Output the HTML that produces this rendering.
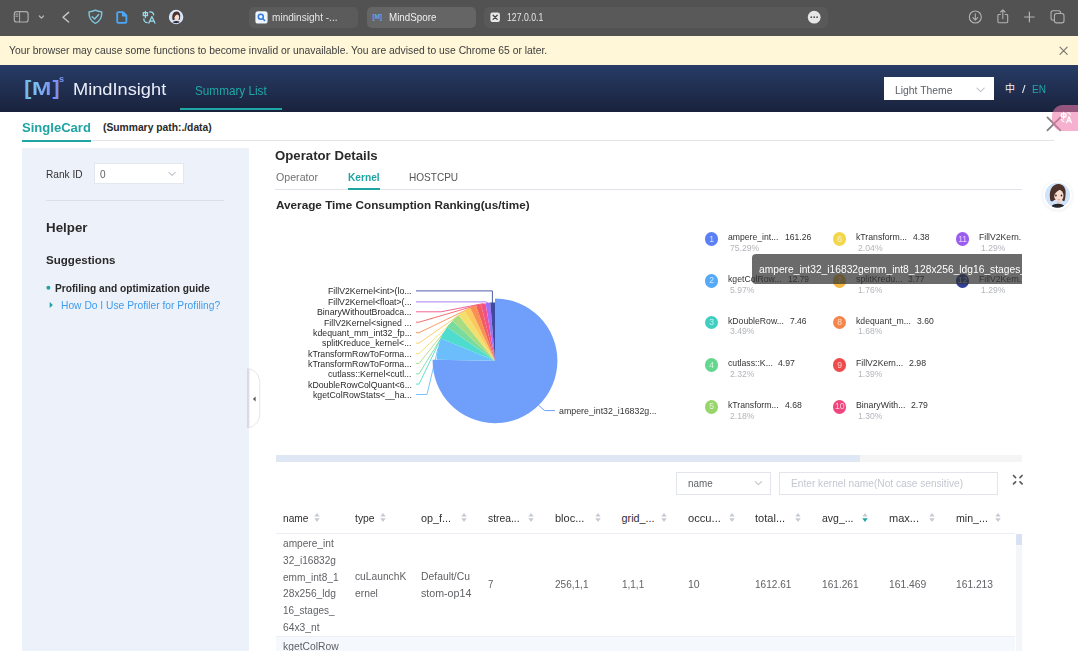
<!DOCTYPE html>
<html><head><meta charset="utf-8">
<style>
*{box-sizing:border-box;margin:0;padding:0}
html,body{width:1080px;height:651px;overflow:hidden;background:#fff;font-family:"Liberation Sans","Noto Sans CJK SC",sans-serif;color:#333}
.abs{position:absolute}
.t{position:absolute;white-space:pre;line-height:1;transform-origin:0 50%}
#chrome{position:absolute;left:0;top:0;width:1078px;height:36px;background:#525252}
.tab{position:absolute;top:7px;height:20.5px;border-radius:5px;background:#5d5d5d}
#warn{position:absolute;left:0;top:36px;width:1078px;height:29px;background:#fff7d8}
#nav{position:absolute;left:0;top:65px;width:1078px;height:47.3px;background:linear-gradient(#283c66,#19223c)}
#left{position:absolute;left:22px;top:147.5px;width:227.4px;height:504px;background:#edf1f9}
#clip{position:absolute;left:0;top:0;width:1022.4px;height:651px;overflow:hidden}
</style></head><body>
<div id="chrome">
  <div class="tab" style="left:248.9px;width:108.7px;background:#5b5b5b"></div>
  <div class="tab" style="left:366.8px;width:108.8px;background:#656565"></div>
  <div class="tab" style="left:484.4px;width:343.4px;background:#595959"></div>
</div>
<div id="warn"></div>
<div id="nav">
  <div class="abs" style="left:180px;top:42.6px;width:102px;height:2px;background:#1fa7a7"></div>
  <div class="abs" style="left:883.6px;top:12.2px;width:110px;height:23.2px;background:#fff"></div>
</div>
<div class="abs" style="left:22px;top:140.2px;width:1032px;height:1px;background:#e3e3e6"></div>
<div class="abs" style="left:22px;top:139.6px;width:69px;height:2px;background:#20a3a3"></div>
<div id="left">
  <div class="abs" style="left:71.5px;top:15.7px;width:90.2px;height:21px;background:#fff;border:1px solid #e3e7f0"></div>
  <div class="abs" style="left:23.6px;top:52.5px;width:178.4px;height:1px;background:#dcdfe6"></div>
</div>
<div class="abs" style="left:275px;top:188.8px;width:747px;height:1px;background:#e0e3ea"></div>
<div class="abs" style="left:347.8px;top:187.8px;width:32px;height:2px;background:#20a3a3"></div>
<!-- scrollbar -->
<div class="abs" style="left:276px;top:455.2px;width:746px;height:6.6px;background:#f5f5f5"></div>
<div class="abs" style="left:276px;top:455.2px;width:584.3px;height:6.6px;background:#dfe7f5"></div>
<!-- filter -->
<div class="abs" style="left:676px;top:472px;width:95px;height:22.7px;background:#fff;border:1px solid #e2e5eb"></div>
<div class="abs" style="left:779px;top:472px;width:219.4px;height:22.7px;background:#fff;border:1px solid #e2e5eb"></div>
<!-- table -->
<div class="abs" style="left:276px;top:533px;width:739px;height:1px;background:#ebeef5"></div>
<div class="abs" style="left:276px;top:636.5px;width:739px;height:15px;background:#f5f9fd"></div>
<div class="abs" style="left:276px;top:636.2px;width:739px;height:1px;background:#ebeef5"></div>
<div class="abs" style="left:1015.8px;top:533.5px;width:6px;height:118px;background:#f5f6fa"></div>
<div class="abs" style="left:1015.8px;top:533.5px;width:6px;height:11.5px;background:#d9e1f2"></div>
<svg class="abs" style="left:0;top:0" width="1080" height="651"><path d="M416,290.9 L492.4,290.9 L492.4,303.4" fill="none" stroke="#3b4b9f" stroke-width=".9"/><path d="M416,301.9 L486,301.9 L487.9,302.8" fill="none" stroke="#a26ef8" stroke-width=".9"/><path d="M416,311.8 L441,311.8 L483.2,303.6" fill="none" stroke="#f0518b" stroke-width=".9"/><path d="M416,322.2 L419,322.2 L478.4,304.8" fill="none" stroke="#f25e5e" stroke-width=".9"/><path d="M416,332.7 L419,332.7 L473.1,306.7" fill="none" stroke="#f98f52" stroke-width=".9"/><path d="M416,343.1 L419,343.1 L467.4,309.3" fill="none" stroke="#fbc95c" stroke-width=".9"/><path d="M416,353.6 L419,353.6 L461.5,313.0" fill="none" stroke="#f3e06c" stroke-width=".9"/><path d="M416,363.5 L419,363.5 L455.5,317.8" fill="none" stroke="#a8dc82" stroke-width=".9"/><path d="M416,373.9 L419,373.9 L449.8,323.8" fill="none" stroke="#78dc9e" stroke-width=".9"/><path d="M416,384.1 L419,384.1 L443.8,332.6" fill="none" stroke="#4edccf" stroke-width=".9"/><path d="M416,394.5 L427,394.5 L437.8,348.9" fill="none" stroke="#6cbdfc" stroke-width=".9"/><path d="M538.7,405.3 L544.6,410.6 L555,410.6" fill="none" stroke="#6f9ffb" stroke-width="1"/><path d="M495,360.8 L495.00,298.40 A62.4,62.4 0 1 1 432.61,359.66 Z" fill="#6f9ffb"/><path d="M495,360.8 L436.61,359.74 A58.4,58.4 0 0 1 441.06,338.42 Z" fill="#6cbdfc"/><path d="M495,360.8 L441.06,338.42 A58.4,58.4 0 0 1 447.22,327.22 Z" fill="#4edccf"/><path d="M495,360.8 L447.22,327.22 A58.4,58.4 0 0 1 452.60,320.64 Z" fill="#78dc9e"/><path d="M495,360.8 L452.60,320.64 A58.4,58.4 0 0 1 458.49,315.22 Z" fill="#a8dc82"/><path d="M495,360.8 L458.49,315.22 A58.4,58.4 0 0 1 464.61,310.93 Z" fill="#f3e06c"/><path d="M495,360.8 L464.61,310.93 A58.4,58.4 0 0 1 470.30,307.88 Z" fill="#fbc95c"/><path d="M495,360.8 L470.30,307.88 A58.4,58.4 0 0 1 476.01,305.57 Z" fill="#f98f52"/><path d="M495,360.8 L476.01,305.57 A58.4,58.4 0 0 1 480.90,304.13 Z" fill="#f25e5e"/><path d="M495,360.8 L480.90,304.13 A58.4,58.4 0 0 1 485.57,303.17 Z" fill="#f0518b"/><path d="M495,360.8 L485.57,303.17 A58.4,58.4 0 0 1 490.27,302.59 Z" fill="#a26ef8"/><path d="M495,360.8 L490.27,302.59 A58.4,58.4 0 0 1 495.00,302.40 Z" fill="#3b4b9f"/></svg>
<svg class="abs" style="left:0;top:0" width="1080" height="140" fill="none" stroke-linecap="round" stroke-linejoin="round">
  <!-- sidebar -->
  <rect x="14.3" y="11.6" width="13.8" height="10.4" rx="2.3" stroke="#adadad" stroke-width="1.2"/>
  <path d="M19.6,11.6 V22 M15.9,14.2 H17.9 M15.9,16.2 H17.9" stroke="#adadad" stroke-width="1"/>
  <path d="M39.3,16 L41.4,18.1 L43.5,16" stroke="#b5b5b5" stroke-width="1.3"/>
  <path d="M68.6,12.4 L63,17.2 L68.6,22" stroke="#c4c4c4" stroke-width="1.5"/>
  <!-- shield -->
  <path d="M95.4,10.2 C93,11.5 90.8,11.8 89,11.9 C88.8,16.6 90.4,20.9 95.4,23.5 C100.4,20.9 102,16.6 101.8,11.9 C100,11.8 97.8,11.5 95.4,10.2 Z" stroke="#82c8df" stroke-width="1.4"/>
  <path d="M92.2,16.7 L94.6,19 L98.7,14.6" stroke="#82c8df" stroke-width="1.4"/>
  <!-- doc -->
  <path d="M118.4,12.1 L123,12.1 L126.4,15.5 L126.4,21.5 Q126.4,22.8 125.1,22.8 L118.4,22.8 Q117.2,22.8 117.2,21.5 L117.2,13.3 Q117.2,12.1 118.4,12.1 Z M122.8,12.3 L122.8,15.7 L126.2,15.7" stroke="#4ca8f8" stroke-width="1.8"/>
  <!-- translate -->
  <g stroke="#98dcec" stroke-width="1.25">
    <path d="M143.3,12.7 H147.5 V15.7 H143.3 Z M145.4,11.4 V17.6"/>
    <path d="M148.9,23.1 L151.9,16.6 L154.9,23.1 M150,21 H153.8"/>
    <path d="M149.6,12 Q153.2,11.8 153.7,14.8 M143.9,18.9 Q143.7,22.3 147.2,22.6"/>
  </g>
  <!-- avatar small -->
  <g transform="translate(176.1,17) scale(.5) translate(-19.5,-19.2)" stroke="none">
    <circle cx="19.5" cy="19.2" r="14.4" fill="#e3ebf7"/>
    <circle cx="19.5" cy="19.2" r="12" fill="#cfe0f7"/>
    <g clip-path="url(#avc)">
    <path d="M12.4,24.8 C11.6,21 11.4,16.5 13,13 C14.6,9.4 18,7.8 21,8 C24.6,8.3 27,11 27.5,14.6 C27.9,18 27.4,22 26.6,24.8 C25.6,25.4 24.6,25 24.4,24 L16,24 C15.6,25.4 13.6,25.8 12.4,24.8 Z" fill="#4c322b"/>
    <rect x="19" y="23.6" width="3.4" height="5.4" fill="#f0cdbd"/>
    <ellipse cx="20.8" cy="19.6" rx="4.7" ry="5.9" fill="#f7ddd0"/>
    <path d="M15.2,19.6 C15.2,15 17.4,11.4 21.6,10.6 C24.6,11.2 26.4,13.6 26.7,17.6 C25.4,15.4 23.6,14 21.8,13.6 C19.6,15.4 17.2,16.2 16.3,19.8 Z" fill="#4c322b"/>
    <ellipse cx="20" cy="31.4" rx="7.4" ry="4" fill="#26263a"/>
    </g>
  </g>
  <!-- tab1 icon -->
  <rect x="255.4" y="11.3" width="12.2" height="12.2" rx="2.6" fill="#eef3fa" stroke="none"/>
  <circle cx="260.8" cy="16.7" r="2.5" stroke="#2f7de1" stroke-width="1.5"/>
  <path d="M262.8,18.7 L264.6,20.5" stroke="#2f7de1" stroke-width="1.6"/>
  <!-- tab3 icon -->
  <rect x="490.4" y="12.6" width="9.5" height="9.5" rx="2" fill="#e9e9e9" stroke="none"/>
  <path d="M493.1,15.3 L497.2,19.4 M497.2,15.3 L493.1,19.4" stroke="#444" stroke-width="1.3"/>
  <!-- dots -->
  <circle cx="814.2" cy="17.2" r="6.4" fill="#e6e6e6" stroke="none"/>
  <circle cx="811.3" cy="17.2" r=".9" fill="#525252" stroke="none"/><circle cx="814.2" cy="17.2" r=".9" fill="#525252" stroke="none"/><circle cx="817.1" cy="17.2" r=".9" fill="#525252" stroke="none"/>
  <!-- download -->
  <g stroke="#b2b2b2" stroke-width="1.1">
  <circle cx="975.3" cy="17" r="6"/>
  <path d="M975.3,13.8 V20 M972.9,17.7 L975.3,20.1 L977.7,17.7"/>
  <!-- share -->
  <path d="M1000.4,14.5 H998.8 Q997.9,14.5 997.9,15.4 V21.8 Q997.9,22.7 998.8,22.7 H1006.8 Q1007.7,22.7 1007.7,21.8 V15.4 Q1007.7,14.5 1006.8,14.5 H1005.2"/>
  <path d="M1002.8,18.6 V10 M1000.6,12 L1002.8,9.8 L1005,12"/>
  <!-- plus -->
  <path d="M1029.4,12.2 V21.8 M1024.6,17 H1034.2" stroke-width="1.2"/>
  <!-- tabs -->
  <rect x="1051" y="10.8" width="9.6" height="9.4" rx="2.2"/>
  <rect x="1054.4" y="13.5" width="9.6" height="9.4" rx="2.2" fill="#525252"/>
  </g>
  <!-- warn close -->
  <path d="M1060,47.1 L1067.2,54.3 M1067.2,47.1 L1060,54.3" stroke="#7a7a72" stroke-width="1.2"/>
  <!-- light theme chevron -->
  <path d="M977,88.2 L980.6,91.6 L984.2,88.2" stroke="#c0c4cc" stroke-width="1.1"/>
  <!-- close X -->
  <path d="M1047.4,117.4 L1060.4,130.4 M1060.4,117.4 L1047.4,130.4" stroke="#7d7d7d" stroke-width="1.7"/>
</svg>
<!-- logo text -->
<span class="t" style="left:24.2px;top:77.2px;font-size:21px;font-weight:bold;color:#73bdee">[</span>
<span class="t" style="left:32.4px;top:80.2px;font-size:18.3px;font-weight:bold;transform:scaleX(1.27);background:linear-gradient(90deg,#7cc4f0,#7b95f2);-webkit-background-clip:text;background-clip:text;color:transparent">M</span>
<span class="t" style="left:52.4px;top:77.2px;font-size:21px;font-weight:bold;color:#7d92f2">]</span>
<span class="t" style="left:59px;top:75.2px;font-size:9px;font-weight:bold;color:#7d92f2">s</span>
<span class="t" style="left:372.6px;top:14.2px;font-size:6.5px;font-weight:bold;color:#62a6ea;letter-spacing:-.2px">[M]</span>
<span class="t" style="left:1005px;top:84px;font-size:10px;color:#eef2fa">中</span>
<!-- pink badge -->
<div class="abs" style="left:1052.3px;top:105px;width:25.7px;height:25.5px;border-radius:11px 0 0 11px;background:rgba(240,120,170,.58)"></div>
<svg class="abs" style="left:1060.2px;top:110.6px" width="16" height="18" viewBox="0 0 18.5 20.8" fill="none" stroke="#fff" stroke-width="1.4" stroke-linecap="round" stroke-linejoin="round">
  <path d="M1.6,3.4 H6.8 V6.8 H1.6 Z M4.2,1.6 V9.2"/><path d="M7.6,13.6 L10.4,6.6 L13.2,13.6 M8.6,11.4 H12.2"/><path d="M9,2 Q11.6,2 12,4.2 M1.8,9.6 Q2,12 4.6,12.2"/>
</svg>
<!-- avatar big -->
<svg class="abs" style="left:1038px;top:176px" width="40" height="40">
  <defs><clipPath id="avc"><circle cx="19.5" cy="19.2" r="12.5"/></clipPath>
  <radialGradient id="avs"><stop offset="0.8" stop-color="#000" stop-opacity=".045"/><stop offset="1" stop-color="#000" stop-opacity="0"/></radialGradient></defs>
  <circle cx="19.5" cy="19.9" r="17.5" fill="url(#avs)"/>
  <circle cx="19.5" cy="19.2" r="14.4" fill="#fff"/>
  <circle cx="19.5" cy="19.2" r="12.5" fill="#cfe3fb"/>
  <g clip-path="url(#avc)">
    <path d="M12.4,24.8 C11.6,21 11.4,16.5 13,13 C14.6,9.4 18,7.8 21,8 C24.6,8.3 27,11 27.5,14.6 C27.9,18 27.4,22 26.6,24.8 C25.6,25.4 24.6,25 24.4,24 L16,24 C15.6,25.4 13.6,25.8 12.4,24.8 Z" fill="#4c322b"/>
    <rect x="19" y="23.6" width="3.4" height="5.4" fill="#f0cdbd"/>
    <ellipse cx="20.8" cy="19.6" rx="4.7" ry="5.9" fill="#f7ddd0"/>
    <path d="M15.2,19.6 C15.2,15 17.4,11.4 21.6,10.6 C24.6,11.2 26.4,13.6 26.7,17.6 C25.4,15.4 23.6,14 21.8,13.6 C19.6,15.4 17.2,16.2 16.3,19.8 Z" fill="#4c322b"/>
    <ellipse cx="17.9" cy="19.4" rx=".85" ry="1" fill="#3a2622"/><ellipse cx="23.5" cy="19.4" rx=".85" ry="1" fill="#3a2622"/>
    <path d="M19.8,23.5 Q20.8,24.2 21.8,23.5" stroke="#d98a8a" stroke-width=".9" fill="none"/>
    <ellipse cx="20" cy="31.4" rx="7" ry="3.6" fill="#26262a"/>
  </g>
</svg>
<!-- left panel glyphs -->
<svg class="abs" style="left:0;top:140px" width="270" height="300" fill="none" stroke-linecap="round" stroke-linejoin="round">
  <path d="M168.9,32.4 L172.1,35.4 L175.3,32.4" stroke="#c0c4cc" stroke-width="1.1"/>
  <circle cx="48.4" cy="147.7" r="2" fill="#20a3a3"/>
  <path d="M49.7,162 L52.9,165 L49.7,168 Z" fill="#20a3a3"/>
  <!-- handle -->
  <path d="M249.4,228.8 C256,230.8 259.8,236 259.8,243 L259.8,273.4 C259.8,280.4 256,285.6 249.4,287.6 Z" fill="#fff" stroke="#e6e6ea" stroke-width="1"/>
  <path d="M247.9,229 V287.4" stroke="#d4d7df" stroke-width="1.6"/>
  <path d="M255.6,256.4 L252.9,259 L255.6,261.6 Z" fill="#555"/>
</svg>
<!-- name select chevron + fullscreen -->
<svg class="abs" style="left:740px;top:468px" width="300" height="30" fill="none" stroke-linecap="round" stroke-linejoin="round">
  <path d="M15.2,13.6 L18.4,16.6 L21.6,13.6" stroke="#c0c4cc" stroke-width="1.1"/>
  <g stroke="#5a5a5a" stroke-width="1.7">
    <path d="M273.5,7.5 L275.6,9.6"/><path d="M282.1,7.5 L280,9.6"/><path d="M273.5,15.9 L275.6,13.8"/><path d="M282.1,15.9 L280,13.8"/>
  </g>
</svg>

<span class="t" style="left:271.7px;top:12.0px;font-size:10.5px;color:#e6e6e6;transform:scaleX(0.959)">mindinsight -...</span>
<span class="t" style="left:388.7px;top:12.0px;font-size:10.5px;color:#f0f0f0;transform:scaleX(0.933)">MindSpore</span>
<span class="t" style="left:506.7px;top:12.0px;font-size:10.5px;color:#e6e6e6;transform:scaleX(0.831)">127.0.0.1</span>
<span class="t" style="left:9.0px;top:45.0px;font-size:10.6px;color:#3c3c3c;transform:scaleX(0.976)">Your browser may cause some functions to become invalid or unavailable. You are advised to use Chrome 65 or later.</span>
<span class="t" style="left:72.8px;top:81.0px;font-size:17px;color:#e9eef9;transform:scaleX(1.072)">MindInsight</span>
<span class="t" style="left:195.0px;top:85.0px;font-size:12.4px;color:#1fa7a7;transform:scaleX(0.947)">Summary List</span>
<span class="t" style="left:895.4px;top:85.0px;font-size:10.6px;color:#5a5e66;transform:scaleX(0.978)">Light Theme</span>
<span class="t" style="left:1031.5px;top:84.0px;font-size:10.6px;color:#1fa7a7;transform:scaleX(0.951)">EN</span>
<span class="t" style="left:1021.5px;top:84.0px;font-size:10.6px;color:#e9eef9;transform:scaleX(1.185)">/</span>
<span class="t" style="left:22.2px;top:121.0px;font-size:13px;font-weight:bold;color:#20a3a3;transform:scaleX(1.004)">SingleCard</span>
<span class="t" style="left:103.0px;top:123.0px;font-size:10.3px;font-weight:bold;color:#2a2a2a;transform:scaleX(1.000)">(Summary path:./data)</span>
<span class="t" style="left:45.6px;top:169.0px;font-size:11px;color:#333;transform:scaleX(0.921)">Rank ID</span>
<span class="t" style="left:100.4px;top:169.0px;font-size:10.6px;color:#606266;transform:scaleX(0.948)">0</span>
<span class="t" style="left:45.6px;top:221.0px;font-size:13.2px;font-weight:bold;color:#2a2a2a;transform:scaleX(1.011)">Helper</span>
<span class="t" style="left:45.6px;top:255.0px;font-size:11.8px;font-weight:bold;color:#2a2a2a;transform:scaleX(0.980)">Suggestions</span>
<span class="t" style="left:54.8px;top:283.0px;font-size:11px;font-weight:bold;color:#2a2a2a;transform:scaleX(0.925)">Profiling and optimization guide</span>
<span class="t" style="left:60.9px;top:300.0px;font-size:11px;color:#3e9cf0;transform:scaleX(0.933)">How Do I Use Profiler for Profiling?</span>
<span class="t" style="left:275.3px;top:149.0px;font-size:13px;font-weight:bold;color:#2a2a2a;transform:scaleX(1.015)">Operator Details</span>
<span class="t" style="left:275.8px;top:172.0px;font-size:11px;color:#727272;transform:scaleX(0.967)">Operator</span>
<span class="t" style="left:347.8px;top:172.0px;font-size:11px;font-weight:bold;color:#20a3a3;transform:scaleX(0.923)">Kernel</span>
<span class="t" style="left:409.2px;top:172.0px;font-size:11px;color:#555;transform:scaleX(0.913)">HOSTCPU</span>
<span class="t" style="left:275.8px;top:199.0px;font-size:11.6px;font-weight:bold;color:#2a2a2a;transform:scaleX(1.012)">Average Time Consumption Ranking(us/time)</span>
<span class="t" style="left:558.6px;top:406.0px;font-size:9.8px;color:#333;transform:scaleX(0.900)">ampere_int32_i16832g...</span>
<span class="t" style="left:283.0px;top:513.0px;font-size:10.8px;color:#2f2f2f;transform:scaleX(0.940)">name</span>
<span class="t" style="left:354.6px;top:513.0px;font-size:10.8px;color:#2f2f2f;transform:scaleX(0.960)">type</span>
<span class="t" style="left:421.0px;top:513.0px;font-size:10.8px;color:#2f2f2f;transform:scaleX(0.999)">op_f...</span>
<span class="t" style="left:488.1px;top:513.0px;font-size:10.8px;color:#2f2f2f;transform:scaleX(0.957)">strea...</span>
<span class="t" style="left:554.9px;top:513.0px;font-size:10.8px;color:#2f2f2f;transform:scaleX(1.020)">bloc...</span>
<span class="t" style="left:621.6px;top:513.0px;font-size:10.8px;color:#2f2f2f;transform:scaleX(1.000)">grid_...</span>
<span class="t" style="left:688.1px;top:513.0px;font-size:10.8px;color:#2f2f2f;transform:scaleX(1.034)">occu...</span>
<span class="t" style="left:755.2px;top:513.0px;font-size:10.8px;color:#2f2f2f;transform:scaleX(1.023)">total...</span>
<span class="t" style="left:821.8px;top:513.0px;font-size:10.8px;color:#2f2f2f;transform:scaleX(0.972)">avg_...</span>
<span class="t" style="left:888.7px;top:513.0px;font-size:10.8px;color:#2f2f2f;transform:scaleX(1.020)">max...</span>
<span class="t" style="left:955.6px;top:513.0px;font-size:10.8px;color:#2f2f2f;transform:scaleX(0.984)">min_...</span>
<span class="t" style="left:283.0px;top:538.0px;font-size:10.6px;color:#606266;transform:scaleX(0.957)">ampere_int</span>
<span class="t" style="left:283.0px;top:555.0px;font-size:10.6px;color:#606266;transform:scaleX(0.957)">32_i16832g</span>
<span class="t" style="left:283.0px;top:572.0px;font-size:10.6px;color:#606266;transform:scaleX(0.952)">emm_int8_1</span>
<span class="t" style="left:283.0px;top:588.0px;font-size:10.6px;color:#606266;transform:scaleX(0.967)">28x256_ldg</span>
<span class="t" style="left:283.0px;top:605.0px;font-size:10.6px;color:#606266;transform:scaleX(0.940)">16_stages_</span>
<span class="t" style="left:283.0px;top:622.0px;font-size:10.6px;color:#606266;transform:scaleX(0.968)">64x3_nt</span>
<span class="t" style="left:354.6px;top:571.0px;font-size:10.6px;color:#606266;transform:scaleX(0.966)">cuLaunchK</span>
<span class="t" style="left:354.6px;top:588.0px;font-size:10.6px;color:#606266;transform:scaleX(0.972)">ernel</span>
<span class="t" style="left:421.0px;top:571.0px;font-size:10.6px;color:#606266;transform:scaleX(0.979)">Default/Cu</span>
<span class="t" style="left:421.0px;top:588.0px;font-size:10.6px;color:#606266;transform:scaleX(1.005)">stom-op14</span>
<span class="t" style="left:488.1px;top:579.0px;font-size:10.6px;color:#606266;transform:scaleX(0.914)">7</span>
<span class="t" style="left:554.9px;top:579.0px;font-size:10.6px;color:#606266;transform:scaleX(0.947)">256,1,1</span>
<span class="t" style="left:621.6px;top:579.0px;font-size:10.6px;color:#606266;transform:scaleX(0.942)">1,1,1</span>
<span class="t" style="left:688.1px;top:579.0px;font-size:10.6px;color:#606266;transform:scaleX(0.992)">10</span>
<span class="t" style="left:755.2px;top:579.0px;font-size:10.6px;color:#606266;transform:scaleX(0.950)">1612.61</span>
<span class="t" style="left:821.8px;top:579.0px;font-size:10.6px;color:#606266;transform:scaleX(0.956)">161.261</span>
<span class="t" style="left:888.7px;top:579.0px;font-size:10.6px;color:#606266;transform:scaleX(0.974)">161.469</span>
<span class="t" style="left:955.6px;top:579.0px;font-size:10.6px;color:#606266;transform:scaleX(0.966)">161.213</span>
<span class="t" style="left:283.0px;top:641.0px;font-size:10.6px;color:#606266;transform:scaleX(0.975)">kgetColRow</span>
<span class="t" style="left:687.8px;top:478.0px;font-size:10.6px;color:#606266;transform:scaleX(0.932)">name</span>
<span class="t" style="left:790.6px;top:478.0px;font-size:10.6px;color:#c3c7cf;transform:scaleX(0.958)">Enter kernel name(Not case sensitive)</span>
<span class="t" style="left:327.8px;top:286.0px;font-size:9.8px;color:#2a2a2a;transform:scaleX(0.892)">FillV2Kernel&lt;int&gt;(lo...</span>
<span class="t" style="left:327.6px;top:297.0px;font-size:9.8px;color:#2a2a2a;transform:scaleX(0.889)">FillV2Kernel&lt;float&gt;(...</span>
<span class="t" style="left:316.8px;top:307.0px;font-size:9.8px;color:#2a2a2a;transform:scaleX(0.895)">BinaryWithoutBroadca...</span>
<span class="t" style="left:323.8px;top:318.0px;font-size:9.8px;color:#2a2a2a;transform:scaleX(0.891)">FillV2Kernel&lt;signed ...</span>
<span class="t" style="left:312.5px;top:328.0px;font-size:9.8px;color:#2a2a2a;transform:scaleX(0.895)">kdequant_mm_int32_fp...</span>
<span class="t" style="left:322.0px;top:338.0px;font-size:9.8px;color:#2a2a2a;transform:scaleX(0.895)">splitKreduce_kernel&lt;...</span>
<span class="t" style="left:307.8px;top:349.0px;font-size:9.8px;color:#2a2a2a;transform:scaleX(0.896)">kTransformRowToForma...</span>
<span class="t" style="left:307.8px;top:359.0px;font-size:9.8px;color:#2a2a2a;transform:scaleX(0.896)">kTransformRowToForma...</span>
<span class="t" style="left:328.0px;top:369.0px;font-size:9.8px;color:#2a2a2a;transform:scaleX(0.893)">cutlass::Kernel&lt;cutl...</span>
<span class="t" style="left:307.5px;top:380.0px;font-size:9.8px;color:#2a2a2a;transform:scaleX(0.894)">kDoubleRowColQuant&lt;6...</span>
<span class="t" style="left:312.5px;top:390.0px;font-size:9.8px;color:#2a2a2a;transform:scaleX(0.892)">kgetColRowStats&lt;__ha...</span>
<div id="clip">
<div class="abs" style="left:704.8px;top:232.2px;width:13.6px;height:13.6px;border-radius:50%;background:#5b80f3"></div><span class="t" style="left:705.1px;top:234.6px;width:13px;text-align:center;font-size:8.6px;color:#fff;opacity:.72">1</span>
<div class="abs" style="left:704.8px;top:274.0px;width:13.6px;height:13.6px;border-radius:50%;background:#55a9f6"></div><span class="t" style="left:705.1px;top:276.4px;width:13px;text-align:center;font-size:8.6px;color:#fff;opacity:.72">2</span>
<div class="abs" style="left:704.8px;top:315.9px;width:13.6px;height:13.6px;border-radius:50%;background:#3fcfc0"></div><span class="t" style="left:705.1px;top:318.3px;width:13px;text-align:center;font-size:8.6px;color:#fff;opacity:.72">3</span>
<div class="abs" style="left:704.8px;top:358.3px;width:13.6px;height:13.6px;border-radius:50%;background:#65d68e"></div><span class="t" style="left:705.1px;top:360.7px;width:13px;text-align:center;font-size:8.6px;color:#fff;opacity:.72">4</span>
<div class="abs" style="left:704.8px;top:400.0px;width:13.6px;height:13.6px;border-radius:50%;background:#98d66c"></div><span class="t" style="left:705.1px;top:402.4px;width:13px;text-align:center;font-size:8.6px;color:#fff;opacity:.72">5</span>
<div class="abs" style="left:832.9px;top:232.2px;width:13.6px;height:13.6px;border-radius:50%;background:#f3d74a"></div><span class="t" style="left:833.2px;top:234.6px;width:13px;text-align:center;font-size:8.6px;color:#fff;opacity:.72">6</span>
<div class="abs" style="left:832.9px;top:274.0px;width:13.6px;height:13.6px;border-radius:50%;background:#f5b941"></div><span class="t" style="left:833.2px;top:276.4px;width:13px;text-align:center;font-size:8.6px;color:#fff;opacity:.72">7</span>
<div class="abs" style="left:832.9px;top:315.9px;width:13.6px;height:13.6px;border-radius:50%;background:#f5864b"></div><span class="t" style="left:833.2px;top:318.3px;width:13px;text-align:center;font-size:8.6px;color:#fff;opacity:.72">8</span>
<div class="abs" style="left:832.9px;top:358.3px;width:13.6px;height:13.6px;border-radius:50%;background:#ee4c4c"></div><span class="t" style="left:833.2px;top:360.7px;width:13px;text-align:center;font-size:8.6px;color:#fff;opacity:.72">9</span>
<div class="abs" style="left:832.9px;top:400.0px;width:13.6px;height:13.6px;border-radius:50%;background:#f0467e"></div><span class="t" style="left:833.2px;top:402.4px;width:13px;text-align:center;font-size:8.6px;color:#fff;opacity:.72">10</span>
<div class="abs" style="left:955.9px;top:232.2px;width:13.6px;height:13.6px;border-radius:50%;background:#9a5df0"></div><span class="t" style="left:956.2px;top:234.6px;width:13px;text-align:center;font-size:8.6px;color:#fff;opacity:.72">11</span>
<div class="abs" style="left:955.9px;top:274.0px;width:13.6px;height:13.6px;border-radius:50%;background:#30409a"></div><span class="t" style="left:956.2px;top:276.4px;width:13px;text-align:center;font-size:8.6px;color:#fff;opacity:.72">12</span>
<span class="t" style="left:728.3px;top:232.0px;font-size:9.8px;color:#333;transform:scaleX(0.881)">ampere_int...</span>
<span class="t" style="left:784.6px;top:232.0px;font-size:9.8px;color:#333;transform:scaleX(0.874)">161.26</span>
<span class="t" style="left:729.6px;top:243.0px;font-size:9.8px;color:#b2b5bb;transform:scaleX(0.882)">75.29%</span>
<span class="t" style="left:728.3px;top:274.0px;font-size:9.8px;color:#333;transform:scaleX(0.888)">kgetColRow...</span>
<span class="t" style="left:788.0px;top:274.0px;font-size:9.8px;color:#333;transform:scaleX(0.856)">12.79</span>
<span class="t" style="left:729.6px;top:285.0px;font-size:9.8px;color:#b2b5bb;transform:scaleX(0.885)">5.97%</span>
<span class="t" style="left:728.3px;top:316.0px;font-size:9.8px;color:#333;transform:scaleX(0.885)">kDoubleRow...</span>
<span class="t" style="left:790.0px;top:316.0px;font-size:9.8px;color:#333;transform:scaleX(0.865)">7.46</span>
<span class="t" style="left:729.6px;top:326.0px;font-size:9.8px;color:#b2b5bb;transform:scaleX(0.885)">3.49%</span>
<span class="t" style="left:728.3px;top:358.0px;font-size:9.8px;color:#333;transform:scaleX(0.887)">cutlass::K...</span>
<span class="t" style="left:778.3px;top:358.0px;font-size:9.8px;color:#333;transform:scaleX(0.886)">4.97</span>
<span class="t" style="left:729.6px;top:369.0px;font-size:9.8px;color:#b2b5bb;transform:scaleX(0.878)">2.32%</span>
<span class="t" style="left:728.3px;top:400.0px;font-size:9.8px;color:#333;transform:scaleX(0.884)">kTransform...</span>
<span class="t" style="left:784.6px;top:400.0px;font-size:9.8px;color:#333;transform:scaleX(0.886)">4.68</span>
<span class="t" style="left:729.6px;top:411.0px;font-size:9.8px;color:#b2b5bb;transform:scaleX(0.878)">2.18%</span>
<span class="t" style="left:856.2px;top:232.0px;font-size:9.8px;color:#333;transform:scaleX(0.889)">kTransform...</span>
<span class="t" style="left:912.5px;top:232.0px;font-size:9.8px;color:#333;transform:scaleX(0.865)">4.38</span>
<span class="t" style="left:857.7px;top:243.0px;font-size:9.8px;color:#b2b5bb;transform:scaleX(0.889)">2.04%</span>
<span class="t" style="left:856.2px;top:274.0px;font-size:9.8px;color:#333;transform:scaleX(0.901)">splitKredu...</span>
<span class="t" style="left:907.6px;top:274.0px;font-size:9.8px;color:#333;transform:scaleX(0.870)">3.77</span>
<span class="t" style="left:857.7px;top:285.0px;font-size:9.8px;color:#b2b5bb;transform:scaleX(0.875)">1.76%</span>
<span class="t" style="left:856.2px;top:316.0px;font-size:9.8px;color:#333;transform:scaleX(0.884)">kdequant_m...</span>
<span class="t" style="left:916.8px;top:316.0px;font-size:9.8px;color:#333;transform:scaleX(0.875)">3.60</span>
<span class="t" style="left:857.7px;top:326.0px;font-size:9.8px;color:#b2b5bb;transform:scaleX(0.875)">1.68%</span>
<span class="t" style="left:856.2px;top:358.0px;font-size:9.8px;color:#333;transform:scaleX(0.883)">FillV2Kern...</span>
<span class="t" style="left:908.7px;top:358.0px;font-size:9.8px;color:#333;transform:scaleX(0.896)">2.98</span>
<span class="t" style="left:857.7px;top:369.0px;font-size:9.8px;color:#b2b5bb;transform:scaleX(0.875)">1.39%</span>
<span class="t" style="left:856.2px;top:400.0px;font-size:9.8px;color:#333;transform:scaleX(0.890)">BinaryWith...</span>
<span class="t" style="left:910.7px;top:400.0px;font-size:9.8px;color:#333;transform:scaleX(0.886)">2.79</span>
<span class="t" style="left:857.7px;top:411.0px;font-size:9.8px;color:#b2b5bb;transform:scaleX(0.875)">1.30%</span>
<span class="t" style="left:978.6px;top:232.0px;font-size:9.8px;color:#333;transform:scaleX(0.881)">FillV2Kern...</span>
<span class="t" style="left:980.6px;top:243.0px;font-size:9.8px;color:#b2b5bb;transform:scaleX(0.875)">1.29%</span>
<span class="t" style="left:978.6px;top:274.0px;font-size:9.8px;color:#333;transform:scaleX(0.881)">FillV2Kern...</span>
<span class="t" style="left:980.6px;top:285.0px;font-size:9.8px;color:#b2b5bb;transform:scaleX(0.875)">1.29%</span>
<div class="abs" style="left:751.6px;top:254.2px;width:300px;height:29.4px;border-radius:4px;background:rgba(50,50,50,0.72)"></div>
<span class="t" style="left:759.2px;top:264px;font-size:10.9px;color:#fff;transform:scaleX(0.940)">ampere_int32_i16832gemm_int8_128x256_ldg16_stages_64x3_nt</span>
</div>
<svg class="abs" style="left:313.2px;top:511.8px" width="8" height="11"><path d="M4,0.9 L6.7,4.5 L1.3,4.5 Z" fill="#c6cad2"/><path d="M4,9.9 L6.7,6.2 L1.3,6.2 Z" fill="#c6cad2"/></svg><svg class="abs" style="left:379.0px;top:511.8px" width="8" height="11"><path d="M4,0.9 L6.7,4.5 L1.3,4.5 Z" fill="#c6cad2"/><path d="M4,9.9 L6.7,6.2 L1.3,6.2 Z" fill="#c6cad2"/></svg><svg class="abs" style="left:459.7px;top:511.8px" width="8" height="11"><path d="M4,0.9 L6.7,4.5 L1.3,4.5 Z" fill="#c6cad2"/><path d="M4,9.9 L6.7,6.2 L1.3,6.2 Z" fill="#c6cad2"/></svg><svg class="abs" style="left:526.8px;top:511.8px" width="8" height="11"><path d="M4,0.9 L6.7,4.5 L1.3,4.5 Z" fill="#c6cad2"/><path d="M4,9.9 L6.7,6.2 L1.3,6.2 Z" fill="#c6cad2"/></svg><svg class="abs" style="left:593.6px;top:511.8px" width="8" height="11"><path d="M4,0.9 L6.7,4.5 L1.3,4.5 Z" fill="#c6cad2"/><path d="M4,9.9 L6.7,6.2 L1.3,6.2 Z" fill="#c6cad2"/></svg><svg class="abs" style="left:660.4px;top:511.8px" width="8" height="11"><path d="M4,0.9 L6.7,4.5 L1.3,4.5 Z" fill="#c6cad2"/><path d="M4,9.9 L6.7,6.2 L1.3,6.2 Z" fill="#c6cad2"/></svg><svg class="abs" style="left:727.5px;top:511.8px" width="8" height="11"><path d="M4,0.9 L6.7,4.5 L1.3,4.5 Z" fill="#c6cad2"/><path d="M4,9.9 L6.7,6.2 L1.3,6.2 Z" fill="#c6cad2"/></svg><svg class="abs" style="left:794.0px;top:511.8px" width="8" height="11"><path d="M4,0.9 L6.7,4.5 L1.3,4.5 Z" fill="#c6cad2"/><path d="M4,9.9 L6.7,6.2 L1.3,6.2 Z" fill="#c6cad2"/></svg><svg class="abs" style="left:861.0px;top:511.8px" width="8" height="11"><path d="M4,0.9 L6.7,4.5 L1.3,4.5 Z" fill="#c6cad2"/><path d="M4,9.9 L6.7,6.2 L1.3,6.2 Z" fill="#20a3a3"/></svg><svg class="abs" style="left:927.5px;top:511.8px" width="8" height="11"><path d="M4,0.9 L6.7,4.5 L1.3,4.5 Z" fill="#c6cad2"/><path d="M4,9.9 L6.7,6.2 L1.3,6.2 Z" fill="#c6cad2"/></svg><svg class="abs" style="left:994.4px;top:511.8px" width="8" height="11"><path d="M4,0.9 L6.7,4.5 L1.3,4.5 Z" fill="#c6cad2"/><path d="M4,9.9 L6.7,6.2 L1.3,6.2 Z" fill="#c6cad2"/></svg>
</body></html>
